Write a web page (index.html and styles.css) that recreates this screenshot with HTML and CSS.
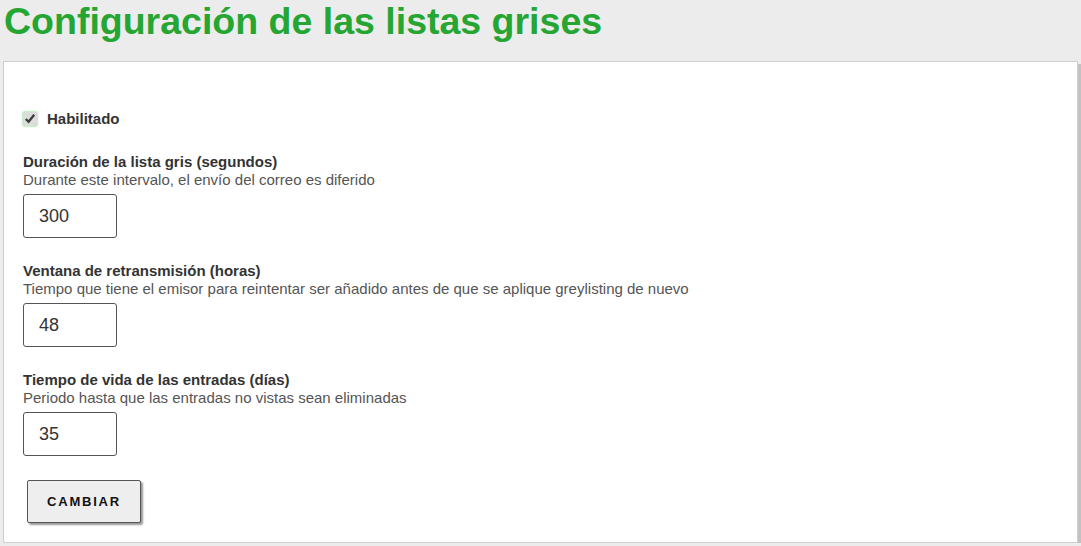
FILE: index.html
```html
<!DOCTYPE html>
<html lang="es">

<head>
    <meta charset="UTF-8">
    <meta name="viewport" content="width=device-width, initial-scale=1.0">
    <title>Configuración de las listas grises</title>
    <link rel="stylesheet" href="styles.css">
</head>

<body>
    <h1 class="title">Configuración de las listas grises</h1>
    <div class="panel">
        <form class="settings">
            <label class="check-row">
                <input type="checkbox" checked>
                <span>Habilitado</span>
            </label>

            <div class="field">
                <div class="field-name">Duración de la lista gris (segundos)</div>
                <div class="field-help">Durante este intervalo, el envío del correo es diferido</div>
                <input class="num-input" type="text" value="300">
            </div>

            <div class="field">
                <div class="field-name">Ventana de retransmisión (horas)</div>
                <div class="field-help">Tiempo que tiene el emisor para reintentar ser añadido antes de que se aplique greylisting de nuevo</div>
                <input class="num-input" type="text" value="48">
            </div>

            <div class="field">
                <div class="field-name">Tiempo de vida de las entradas (días)</div>
                <div class="field-help">Periodo hasta que las entradas no vistas sean eliminadas</div>
                <input class="num-input" type="text" value="35">
            </div>

            <button type="button" class="btn">CAMBIAR</button>
        </form>
    </div>
</body>

</html>
```

FILE: styles.css
```css
body {
    margin: 0;
    background-color: #ececec;
    font-family: 'Liberation Sans', Arial, sans-serif;
    color: #333;
}

.title {
    margin: 0;
    padding: 0 4px;
    height: 61px;
    font-size: 37.5px;
    line-height: 42px;
    font-weight: bold;
    color: #25a532;
}

.panel {
    margin: 0 3px 0 3px;
    height: 480px;
    background-color: #fff;
    border: 1px solid #cfcfcf;
    box-shadow: 3px 3px 0 #c2c2c2;
}

.settings {
    display: flex;
    flex-direction: column;
    align-items: flex-start;
    padding: 48px 19px 0 19px;
}

.check-row {
    display: flex;
    align-items: center;
    gap: 10px;
    font-size: 15px;
    font-weight: bold;
    line-height: 18px;
    margin-bottom: 25px;
}

.check-row input {
    margin: 0;
    width: 14px;
    height: 14px;
    box-shadow: 0 0 2px #5c5;
    accent-color: #ddd;
}

.field {
    display: flex;
    flex-direction: column;
    margin-bottom: 24px;
}

.field-name {
    font-size: 15px;
    font-weight: bold;
    line-height: 18px;
}

.field-help {
    font-size: 15px;
    line-height: 18px;
    color: #555;
    margin-bottom: 5px;
}

.num-input {
    width: 94px;
    height: 44px;
    box-sizing: border-box;
    border: 1px solid #555;
    border-radius: 3px;
    padding: 0 15px;
    font-family: 'Liberation Sans', Arial, sans-serif;
    font-size: 18px;
    color: #333;
}

.btn {
    margin: 0 0 0 4px;
    width: 114px;
    height: 43px;
    background-color: #eee;
    border: 1px solid #555;
    border-radius: 2px;
    box-shadow: 2px 2px 2px #999;
    font-family: 'Liberation Sans', Arial, sans-serif;
    font-size: 13px;
    font-weight: bold;
    letter-spacing: 1.8px;
    color: #111;
    cursor: pointer;
}
```
